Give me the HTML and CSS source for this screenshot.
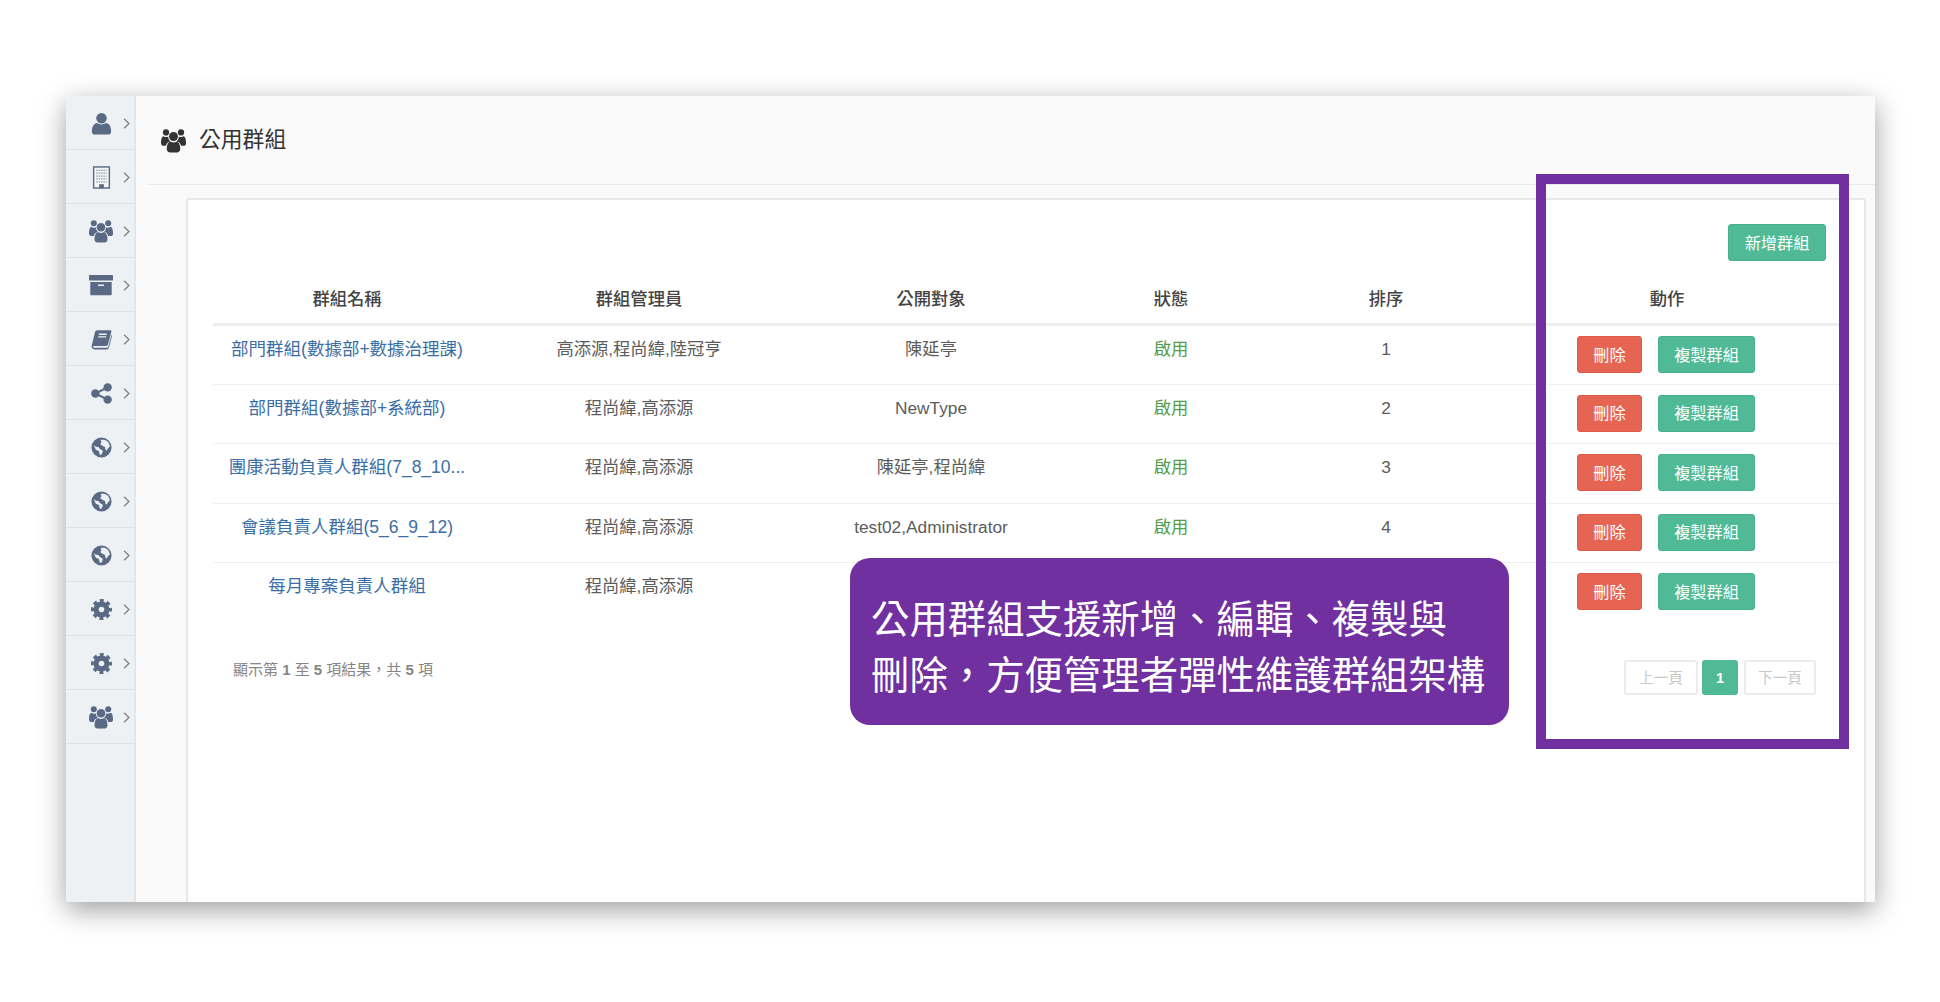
FILE: index.html
```html
<!DOCTYPE html>
<html>
<head>
<title>公用群組</title>
<link rel="stylesheet" href="styles.css">
</head>
<body>

<svg class="defs" width="0" height="0">
	<symbol id="i-user" viewBox="0 0 24 24">
		<circle cx="12" cy="6.500" r="5.500"/>
		<path d="M2 20.500c0-5.500 2-8.500 5.500-9 2.500 2 6.500 2 9 0 3.500.5 5.500 3.500 5.500 9 0 1.800-1.200 3-3 3H5c-1.800 0-3-1.200-3-3z"/>
	</symbol>
	<symbol id="i-building" viewBox="0 0 24 24">
		<rect x="3.800" y="1" width="16.400" height="22" fill="#f4f6f8" stroke="currentColor" stroke-width="1.500"/>
		<path d="M6.500 4.500h11M6.500 7.500h11M6.500 10.500h11M6.500 13.500h11M6.500 16.500h11" fill="none" stroke="currentColor" stroke-width="1.400" stroke-dasharray="1.600 .9" opacity=".65"/>
		<rect x="9.500" y="19" width="5" height="4"/>
	</symbol>
	<symbol id="i-users" viewBox="0 0 24 24">
		<circle cx="4.800" cy="4.300" r="3"/>
		<circle cx="19.200" cy="4.300" r="3"/>
		<path d="M0 14c0-4 1-6 2.500-6.200 1.500 1.200 3 1.200 4.500.4-.3 1.800.6 3.500 2 4.500-2.500.6-3.800 2.200-4.200 4.300H1.500C.5 16.500 0 15.500 0 14zM24 14c0-4-1-6-2.500-6.200-1.500 1.200-3 1.200-4.500.4.300 1.800-.6 3.500-2 4.500 2.500.6 3.800 2.200 4.200 4.300h3.300c1 0 1.500-1 1.500-2.500z"/>
		<circle cx="12" cy="8.200" r="4.300"/>
		<path d="M5.500 20c0-4 1.500-6.500 3.500-7 2 1.300 4 1.300 6 0 2 .5 3.500 3 3.500 7 0 2-1 3.500-3 3.500h-7c-2 0-3-1.500-3-3.500z"/>
	</symbol>
	<symbol id="i-archive" viewBox="0 0 24 24">
		<rect x="0" y="2" width="24" height="5.500" rx=".6"/>
		<path d="M1.300 9h21.400v12.200c0 .6-.4 1-1 1H2.300c-.6 0-1-.4-1-1zM9 11.500v1.600h6v-1.600z" fill-rule="evenodd"/>
	</symbol>
	<symbol id="i-book" viewBox="0 0 24 24">
		<path d="M7 1.500h15c1 0 1.500.8 1.200 1.800l-3.800 14.500c-.3 1-1 1.500-2 1.500H4c-1.300 0-1.600.7-1.500 1.200.1.500.6 1 1.500 1h14.500c.6 0 1-.4 1.200-.9L23.400 6.500c.5.400.7 1 .5 1.700l-3.400 13.300c-.3 1-1.100 1.800-2.300 1.800H3.800C1.800 23.300.3 21.400.7 19.500L4.500 3.700C4.800 2.400 5.800 1.500 7 1.500z"/>
		<path d="M9 6h9M8.300 9h9" stroke="#edf1f3" stroke-width="1.500" fill="none"/>
	</symbol>
	<symbol id="i-share" viewBox="0 0 24 24">
		<circle cx="19" cy="5" r="4.800"/>
		<circle cx="19" cy="19" r="4.800"/>
		<circle cx="5" cy="12" r="4.800"/>
		<path d="M19 5 5 12l14 7" fill="none" stroke="currentColor" stroke-width="2.400"/>
	</symbol>
	<symbol id="i-globe" viewBox="0 0 24 24">
		<circle cx="12" cy="12" r="11.500"/>
		<path d="M11 3.500c2-1 6-.5 8 1.500 1.500 1.500 2.500 4 2.500 6l-2 1.500-1.500 3-1.500-1-.5-3-3-1.500-2.500-2 1.500-2zM3 9l2.500 2 3 .5 2 2.500 2.500 1 .5 2-2 3.500-1.500-.5-1-4-3.500-1.500z" fill="#edf1f3"/>
	</symbol>
	<symbol id="i-cog" viewBox="0 0 24 24">
		<circle cx="12" cy="12" r="6.200" fill="none" stroke="currentColor" stroke-width="6"/>
		<circle cx="12" cy="12" r="10" fill="none" stroke="currentColor" stroke-width="4" stroke-dasharray="4.350 3.500" stroke-dashoffset="2.200"/>
	</symbol>
	<symbol id="i-chevron" viewBox="0 0 8 14">
		<path d="M1.200 1.500 6.800 7l-5.600 5.500" fill="none" stroke="currentColor" stroke-width="1.600"/>
	</symbol>
</svg>

<div class="window">
	<div class="sidebar">
		<div class="navitem"><span class="navicon"><svg class="ic ic-user"><use href="#i-user"/></svg></span><svg class="chev"><use href="#i-chevron"/></svg></div>
		<div class="navitem"><span class="navicon"><svg class="ic ic-user"><use href="#i-building"/></svg></span><svg class="chev"><use href="#i-chevron"/></svg></div>
		<div class="navitem"><span class="navicon"><svg class="ic ic-wide"><use href="#i-users"/></svg></span><svg class="chev"><use href="#i-chevron"/></svg></div>
		<div class="navitem"><span class="navicon"><svg class="ic ic-wide"><use href="#i-archive"/></svg></span><svg class="chev"><use href="#i-chevron"/></svg></div>
		<div class="navitem"><span class="navicon"><svg class="ic"><use href="#i-book"/></svg></span><svg class="chev"><use href="#i-chevron"/></svg></div>
		<div class="navitem"><span class="navicon"><svg class="ic"><use href="#i-share"/></svg></span><svg class="chev"><use href="#i-chevron"/></svg></div>
		<div class="navitem"><span class="navicon"><svg class="ic"><use href="#i-globe"/></svg></span><svg class="chev"><use href="#i-chevron"/></svg></div>
		<div class="navitem"><span class="navicon"><svg class="ic"><use href="#i-globe"/></svg></span><svg class="chev"><use href="#i-chevron"/></svg></div>
		<div class="navitem"><span class="navicon"><svg class="ic"><use href="#i-globe"/></svg></span><svg class="chev"><use href="#i-chevron"/></svg></div>
		<div class="navitem"><span class="navicon"><svg class="ic"><use href="#i-cog"/></svg></span><svg class="chev"><use href="#i-chevron"/></svg></div>
		<div class="navitem"><span class="navicon"><svg class="ic"><use href="#i-cog"/></svg></span><svg class="chev"><use href="#i-chevron"/></svg></div>
		<div class="navitem"><span class="navicon"><svg class="ic ic-wide"><use href="#i-users"/></svg></span><svg class="chev"><use href="#i-chevron"/></svg></div>
	</div>

	<div class="main">
		<div class="pagehead">
			<svg class="headicon"><use href="#i-users"/></svg>
			<h1>公用群組</h1>
		</div>

		<div class="panel">
			<div class="toolbar">
				<button type="button" class="btn green addbtn">新增群組</button>
			</div>

			<table class="grouptable">
				<thead>
					<tr>
						<th class="c-name">群組名稱</th>
						<th class="c-admin">群組管理員</th>
						<th class="c-target">公開對象</th>
						<th class="c-status">狀態</th>
						<th class="c-order">排序</th>
						<th class="c-action">動作</th>
					</tr>
				</thead>
				<tbody>
					<tr>
						<td><a href="#">部門群組(數據部+數據治理課)</a></td>
						<td>高添源,程尚緯,陸冠亨</td>
						<td>陳延亭</td>
						<td class="enabled">啟用</td>
						<td>1</td>
						<td class="actions"><div class="btnrow"><button type="button" class="btn red">刪除</button><button type="button" class="btn green">複製群組</button></div></td>
					</tr>
					<tr>
						<td><a href="#">部門群組(數據部+系統部)</a></td>
						<td>程尚緯,高添源</td>
						<td>NewType</td>
						<td class="enabled">啟用</td>
						<td>2</td>
						<td class="actions"><div class="btnrow"><button type="button" class="btn red">刪除</button><button type="button" class="btn green">複製群組</button></div></td>
					</tr>
					<tr>
						<td><a href="#">團康活動負責人群組(7_8_10...</a></td>
						<td>程尚緯,高添源</td>
						<td>陳延亭,程尚緯</td>
						<td class="enabled">啟用</td>
						<td>3</td>
						<td class="actions"><div class="btnrow"><button type="button" class="btn red">刪除</button><button type="button" class="btn green">複製群組</button></div></td>
					</tr>
					<tr>
						<td><a href="#">會議負責人群組(5_6_9_12)</a></td>
						<td>程尚緯,高添源</td>
						<td>test02,Administrator</td>
						<td class="enabled">啟用</td>
						<td>4</td>
						<td class="actions"><div class="btnrow"><button type="button" class="btn red">刪除</button><button type="button" class="btn green">複製群組</button></div></td>
					</tr>
					<tr class="lastrow">
						<td><a href="#">每月專案負責人群組</a></td>
						<td>程尚緯,高添源</td>
						<td></td>
						<td></td>
						<td></td>
						<td class="actions"><div class="btnrow"><button type="button" class="btn red">刪除</button><button type="button" class="btn green">複製群組</button></div></td>
					</tr>
				</tbody>
			</table>

			<div class="tablefoot">
				<div class="info">顯示第 <b>1</b> 至 <b>5</b> 項結果&#65292;共 <b>5</b> 項</div>
				<div class="pager">
					<span class="pagebtn prev">上一頁</span>
					<span class="pagebtn current">1</span>
					<span class="pagebtn next">下一頁</span>
				</div>
			</div>
		</div>
	</div>
</div>

<div class="highlight"></div>
<div class="callout">公用群組支援新增、編輯、複製與<br>刪除&#65292;方便管理者彈性維護群組架構</div>

</body>
</html>
```

FILE: styles.css
```css
html, body {
	margin: 0;
	height: 1002px;
	overflow: hidden;
	background-color: white;
}

body {
	position: relative;
	padding: 96px 65px 0 66px;
	box-sizing: border-box;
	font-family: "Liberation Sans", "Noto Sans CJK TC", sans-serif;
	font-size: 17.3px;
	line-height: 24px;
	color: #5c5c5c;
}

.defs {
	position: absolute;
}

/* window */

.window {
	display: flex;
	height: 806px;
	overflow: hidden;
	background-color: #fafafa;
	box-shadow: 0 8px 26px rgba(0, 0, 0, 0.38);
}

/* left nav */

.sidebar {
	flex: 0 0 68px;
	background-color: #edf1f3;
	border-right: 2px solid #e2e6e8;
}

.navitem {
	display: flex;
	align-items: center;
	height: 54px;
	box-sizing: border-box;
	padding-left: 23px;
	padding-top: 1px;
	border-bottom: 1px solid #dde2e5;
	color: #5a6a85;
}

.navicon {
	display: flex;
	justify-content: center;
	align-items: center;
	width: 24px;
}

.ic {
	width: 21px;
	height: 21px;
	fill: currentColor;
}

.ic-user {
	width: 23px;
	height: 23px;
}

.ic-wide {
	width: 24px;
	height: 24px;
}

.chev {
	width: 7px;
	height: 13px;
	margin-left: 10px;
	color: #858585;
}

/* content */

.main {
	flex: 1;
	min-width: 0;
}

.pagehead {
	display: flex;
	align-items: center;
	height: 89px;
	box-sizing: border-box;
	margin-left: 12px;
	padding-left: 13px;
	border-bottom: 1px solid #e8e8e8;
}

.headicon {
	width: 25px;
	height: 25px;
	fill: #333;
}

h1 {
	margin: 0 0 0 13px;
	font-size: 21.8px;
	font-weight: 400;
	color: #333;
}

.panel {
	height: 800px;
	margin: 13px 9px 0 50px;
	padding: 24px 27px 0 25px;
	background-color: white;
	border: 2px solid #e8e8e8;
	border-width: 2px 2px 0 2px;
	border-radius: 3px 3px 0 0;
}

.toolbar {
	display: flex;
	justify-content: flex-end;
	margin-right: 11px;
	margin-bottom: 13px;
}

.btn {
	height: 37px;
	padding: 0 0 2px 0;
	border: 1px solid transparent;
	border-radius: 3px;
	font-family: inherit;
	font-size: 16.2px;
	color: white;
}

.green {
	width: 97px;
	background-color: #4fba95;
	border-color: #49b08c;
}

.addbtn {
	width: 98px;
}

.red {
	width: 65px;
	background-color: #e66452;
	border-color: #dc5c4b;
}

/* table */

.grouptable {
	width: 1626px;
	table-layout: fixed;
	border-collapse: collapse;
}

.grouptable th {
	height: 49px;
	padding: 0;
	font-weight: 500;
	color: #444;
	border-bottom: 3px solid #eeeeee;
}

.c-name { width: 268px; }
.c-admin { width: 316px; }
.c-target { width: 268px; }
.c-status { width: 212px; }
.c-order { width: 218px; }
.c-action { width: 344px; }

.grouptable td {
	height: 59.5px;
	box-sizing: border-box;
	padding: 11px 0 0 0;
	text-align: center;
	vertical-align: top;
	white-space: nowrap;
	border-bottom: 1px solid #f0f0f0;
}

.grouptable .lastrow td {
	border-bottom: none;
}

.grouptable a {
	font-size: 17.5px;
	color: #3a6ea5;
	text-decoration: none;
}

.grouptable .enabled {
	color: #559d47;
}

.grouptable td.actions {
	padding: 10px 0 0 82px;
}

.btnrow {
	display: flex;
	gap: 16px;
}

/* footer */

.tablefoot {
	display: flex;
	justify-content: space-between;
	align-items: flex-start;
	width: 1583px;
	margin-top: 38px;
	padding-left: 20px;
	padding-right: 23px;
}

.info {
	margin-top: -2px;
	font-size: 15px;
	color: #858585;
}

.info b {
	font-weight: 700;
}

.pager {
	display: flex;
	gap: 4px;
	font-size: 14.7px;
}

.pagebtn {
	display: flex;
	justify-content: center;
	align-items: center;
	height: 35px;
	box-sizing: border-box;
	border: 2px solid #ececec;
	border-radius: 3px;
	color: #c8c8c8;
}

.prev {
	width: 74px;
}

.current {
	width: 36px;
	background-color: #4fba95;
	border-color: #4fba95;
	font-weight: 700;
	color: white;
}

.next {
	width: 72px;
	margin-left: 2px;
}

/* annotations drawn over the screenshot */

.highlight {
	position: absolute;
	left: 1536px;
	top: 174px;
	width: 313px;
	height: 575px;
	box-sizing: border-box;
	border: 10px solid #7030a0;
}

.callout {
	position: absolute;
	left: 850px;
	top: 558px;
	width: 659px;
	height: 167px;
	box-sizing: border-box;
	padding: 30px 0 0 21px;
	background-color: #7030a0;
	border-radius: 20px;
	font-family: "Noto Sans CJK TC", "Liberation Sans", sans-serif;
	font-size: 38.4px;
	font-weight: 400;
	line-height: 56px;
	color: white;
	white-space: nowrap;
}
```
